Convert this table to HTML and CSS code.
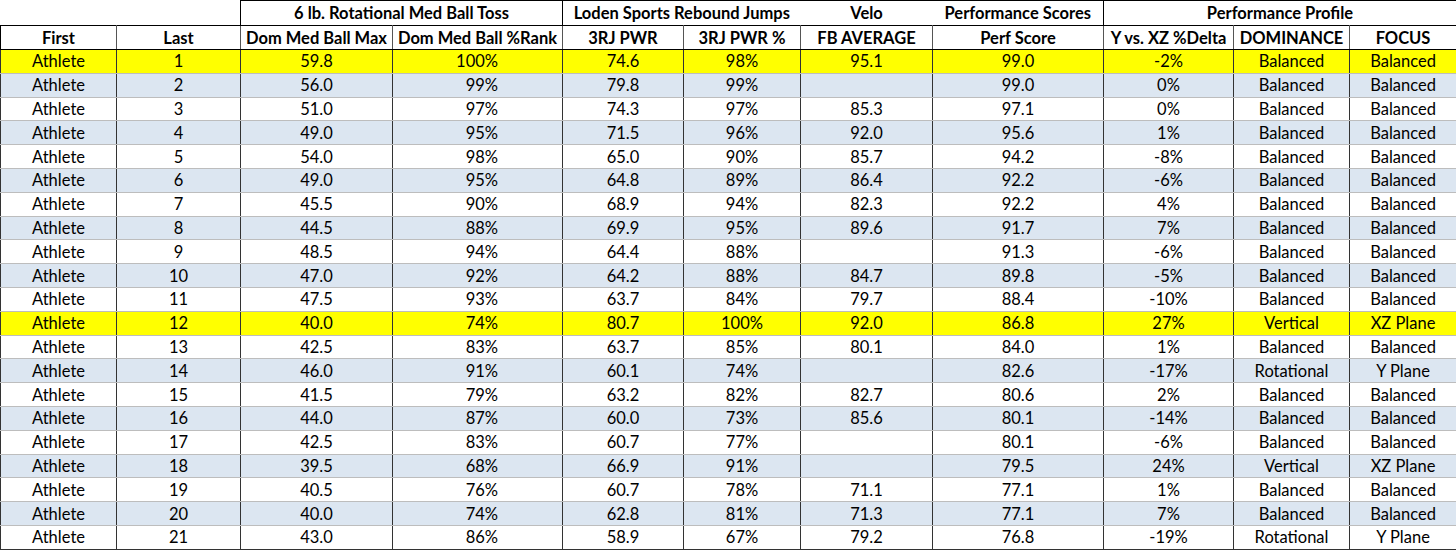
FILE: index.html
```html
<!DOCTYPE html>
<html>
<head>
<meta charset="utf-8">
<link rel="stylesheet" href="styles.css">
</head>
<body>
<table class="sheet">
  <colgroup>
    <col class="c1"><col class="c2"><col class="c3"><col class="c4"><col class="c5"><col class="c6"><col class="c7"><col class="c8"><col class="c9"><col class="c10"><col class="c11">
  </colgroup>
  <thead>
    <tr class="group-row">
      <td class="blank" colspan="2"></td>
      <th colspan="2" class="g g-box">6 lb. Rotational Med Ball Toss</th>
      <th colspan="2" class="g g-left">Loden Sports Rebound Jumps</th>
      <th class="g">Velo</th>
      <th class="g g-right">Performance Scores</th>
      <th colspan="3" class="g g-box">Performance Profile</th>
    </tr>
    <tr class="head-row">
      <th>First</th><th>Last</th><th>Dom Med Ball Max</th><th>Dom Med Ball %Rank</th><th>3RJ PWR</th><th>3RJ PWR %</th><th>FB AVERAGE</th><th>Perf Score</th><th>Y vs. XZ %Delta</th><th>DOMINANCE</th><th>FOCUS</th>
    </tr>
  </thead>
  <tbody>
    <tr class="hl"><td>Athlete</td><td>1</td><td>59.8</td><td class="rk">100%</td><td>74.6</td><td>98%</td><td>95.1</td><td>99.0</td><td>-2%</td><td>Balanced</td><td>Balanced</td></tr>
    <tr class="alt"><td>Athlete</td><td>2</td><td>56.0</td><td class="rk">99%</td><td>79.8</td><td>99%</td><td></td><td>99.0</td><td>0%</td><td>Balanced</td><td>Balanced</td></tr>
    <tr><td>Athlete</td><td>3</td><td>51.0</td><td class="rk">97%</td><td>74.3</td><td>97%</td><td>85.3</td><td>97.1</td><td>0%</td><td>Balanced</td><td>Balanced</td></tr>
    <tr class="alt"><td>Athlete</td><td>4</td><td>49.0</td><td class="rk">95%</td><td>71.5</td><td>96%</td><td>92.0</td><td>95.6</td><td>1%</td><td>Balanced</td><td>Balanced</td></tr>
    <tr><td>Athlete</td><td>5</td><td>54.0</td><td class="rk">98%</td><td>65.0</td><td>90%</td><td>85.7</td><td>94.2</td><td>-8%</td><td>Balanced</td><td>Balanced</td></tr>
    <tr class="alt"><td>Athlete</td><td>6</td><td>49.0</td><td class="rk">95%</td><td>64.8</td><td>89%</td><td>86.4</td><td>92.2</td><td>-6%</td><td>Balanced</td><td>Balanced</td></tr>
    <tr><td>Athlete</td><td>7</td><td>45.5</td><td class="rk">90%</td><td>68.9</td><td>94%</td><td>82.3</td><td>92.2</td><td>4%</td><td>Balanced</td><td>Balanced</td></tr>
    <tr class="alt"><td>Athlete</td><td>8</td><td>44.5</td><td class="rk">88%</td><td>69.9</td><td>95%</td><td>89.6</td><td>91.7</td><td>7%</td><td>Balanced</td><td>Balanced</td></tr>
    <tr><td>Athlete</td><td>9</td><td>48.5</td><td class="rk">94%</td><td>64.4</td><td>88%</td><td></td><td>91.3</td><td>-6%</td><td>Balanced</td><td>Balanced</td></tr>
    <tr class="alt"><td>Athlete</td><td>10</td><td>47.0</td><td class="rk">92%</td><td>64.2</td><td>88%</td><td>84.7</td><td>89.8</td><td>-5%</td><td>Balanced</td><td>Balanced</td></tr>
    <tr><td>Athlete</td><td>11</td><td>47.5</td><td class="rk">93%</td><td>63.7</td><td>84%</td><td>79.7</td><td>88.4</td><td>-10%</td><td>Balanced</td><td>Balanced</td></tr>
    <tr class="hl"><td>Athlete</td><td>12</td><td>40.0</td><td class="rk">74%</td><td>80.7</td><td>100%</td><td>92.0</td><td>86.8</td><td>27%</td><td>Vertical</td><td>XZ Plane</td></tr>
    <tr><td>Athlete</td><td>13</td><td>42.5</td><td class="rk">83%</td><td>63.7</td><td>85%</td><td>80.1</td><td>84.0</td><td>1%</td><td>Balanced</td><td>Balanced</td></tr>
    <tr class="alt"><td>Athlete</td><td>14</td><td>46.0</td><td class="rk">91%</td><td>60.1</td><td>74%</td><td></td><td>82.6</td><td>-17%</td><td>Rotational</td><td>Y Plane</td></tr>
    <tr><td>Athlete</td><td>15</td><td>41.5</td><td class="rk">79%</td><td>63.2</td><td>82%</td><td>82.7</td><td>80.6</td><td>2%</td><td>Balanced</td><td>Balanced</td></tr>
    <tr class="alt"><td>Athlete</td><td>16</td><td>44.0</td><td class="rk">87%</td><td>60.0</td><td>73%</td><td>85.6</td><td>80.1</td><td>-14%</td><td>Balanced</td><td>Balanced</td></tr>
    <tr><td>Athlete</td><td>17</td><td>42.5</td><td class="rk">83%</td><td>60.7</td><td>77%</td><td></td><td>80.1</td><td>-6%</td><td>Balanced</td><td>Balanced</td></tr>
    <tr class="alt"><td>Athlete</td><td>18</td><td>39.5</td><td class="rk">68%</td><td>66.9</td><td>91%</td><td></td><td>79.5</td><td>24%</td><td>Vertical</td><td>XZ Plane</td></tr>
    <tr><td>Athlete</td><td>19</td><td>40.5</td><td class="rk">76%</td><td>60.7</td><td>78%</td><td>71.1</td><td>77.1</td><td>1%</td><td>Balanced</td><td>Balanced</td></tr>
    <tr class="alt"><td>Athlete</td><td>20</td><td>40.0</td><td class="rk">74%</td><td>62.8</td><td>81%</td><td>71.3</td><td>77.1</td><td>7%</td><td>Balanced</td><td>Balanced</td></tr>
    <tr><td>Athlete</td><td>21</td><td>43.0</td><td class="rk">86%</td><td>58.9</td><td>67%</td><td>79.2</td><td>76.8</td><td>-19%</td><td>Rotational</td><td>Y Plane</td></tr>
  </tbody>
</table>
</body>
</html>
```

FILE: styles.css
```css
html, body {
  margin: 0;
  padding: 0;
  background: #ffffff;
}

.sheet {
  width: 1456px;
  table-layout: fixed;
  border-collapse: collapse;
  font-family: Lato, "Liberation Sans", sans-serif;
  font-size: 16.5px;
  color: #000;
}

.c1 { width: 116px; }
.c2 { width: 124px; }
.c3 { width: 152px; }
.c4 { width: 170px; }
.c5 { width: 121px; }
.c6 { width: 117px; }
.c7 { width: 132px; }
.c8 { width: 171px; }
.c9 { width: 130px; }
.c10 { width: 116px; }
.c11 { width: 107px; }

.sheet th, .sheet td {
  padding: 0;
  text-align: center;
  white-space: nowrap;
  overflow: hidden;
  line-height: 20px;
}

.group-row { height: 25px; }
.group-row th {
  font-weight: bold;
  border-top: 1px solid #000;
}
.group-row .blank { border: none; }
.g-box { border-left: 1px solid #000; border-right: 1px solid #000; }
.g-left { border-left: 1px solid #000; }
.g-right { border-right: 1px solid #000; }

.head-row { height: 24px; }
.head-row th {
  font-weight: bold;
  border: 1px solid #000;
  border-left-color: #555;
  border-right-color: #555;
}
.head-row th:first-child { border-left-color: #000; }
.head-row th:last-child { border-right-color: #000; }

tbody tr { height: 23.8px; }
tbody td {
  border-left: 1px solid #333;
  border-right: 1px solid #333;
  border-bottom: 1px solid #bdbdbd;
}
tbody tr:last-child td { border-bottom: 1px solid #333; }

tbody tr.alt td { background: #dce6f1; }
tbody tr.hl td { background: #ffff00; }

tbody td.rk {
  text-align: right;
  padding-right: 64px;
}
```
